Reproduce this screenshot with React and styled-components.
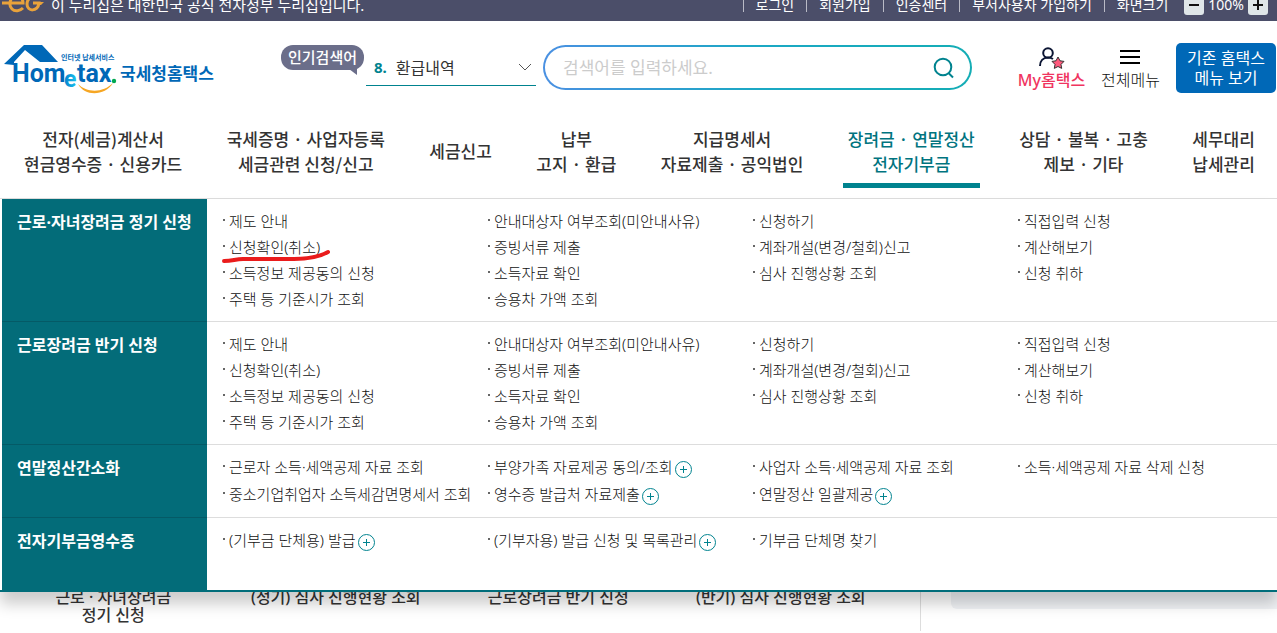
import React from 'react'
import styled, { createGlobalStyle } from 'styled-components'

const NAV = [
    ['전자(세금)계산서', '현금영수증 · 신용카드'],
    ['국세증명 · 사업자등록', '세금관련 신청/신고'],
    ['세금신고'],
    ['납부', '고지 · 환급'],
    ['지급명세서', '자료제출 · 공익법인'],
    ['장려금 · 연말정산', '전자기부금'],
    ['상담 · 불복 · 고충', '제보 · 기타'],
    ['세무대리', '납세관리'],
]
const ACTIVE_NAV = 5

const APPLY_LINKS = [
    [{ text: '제도 안내' }, { text: '안내대상자 여부조회(미안내사유)' }, { text: '신청하기' }, { text: '직접입력 신청' }],
    [{ text: '신청확인(취소)' }, { text: '증빙서류 제출' }, { text: '계좌개설(변경/철회)신고' }, { text: '계산해보기' }],
    [{ text: '소득정보 제공동의 신청' }, { text: '소득자료 확인' }, { text: '심사 진행상황 조회' }, { text: '신청 취하' }],
    [{ text: '주택 등 기준시가 조회' }, { text: '승용차 가액 조회' }],
]

const SECTIONS = [
    {
        title: '근로·자녀장려금 정기 신청',
        rows: APPLY_LINKS.map((row, i) => (i === 1 ? [{ ...row[0], marked: true }, ...row.slice(1)] : row)),
    },
    { title: '근로장려금 반기 신청', rows: APPLY_LINKS },
    {
        title: '연말정산간소화',
        rows: [
            [
                { text: '근로자 소득·세액공제 자료 조회' },
                { text: '부양가족 자료제공 동의/조회', more: true },
                { text: '사업자 소득·세액공제 자료 조회' },
                { text: '소득·세액공제 자료 삭제 신청' },
            ],
            [
                { text: '중소기업취업자 소득세감면명세서 조회' },
                { text: '영수증 발급처 자료제출', more: true },
                { text: '연말정산 일괄제공', more: true },
            ],
        ],
    },
    {
        title: '전자기부금영수증',
        rows: [
            [
                { text: '(기부금 단체용) 발급', more: true },
                { text: '(기부자용) 발급 신청 및 목록관리', more: true },
                { text: '기부금 단체명 찾기' },
            ],
        ],
    },
]

const App = () => {
    return (
        <Page>
            <GlobalStyle />
            <TopBar>
                <Notice>
                    <GovMark />
                    <span>이 누리집은 대한민국 공식 전자정부 누리집입니다.</span>
                </Notice>
                <UserLinks>
                    <a href="#login">로그인</a>
                    <a href="#join">회원가입</a>
                    <a href="#cert">인증센터</a>
                    <a href="#dept">부서사용자 가입하기</a>
                    <span>화면크기</span>
                </UserLinks>
                <Zoom>
                    <ZoomButton type="button" aria-label="축소"><ZoomIcon /></ZoomButton>
                    <span>100%</span>
                    <ZoomButton type="button" aria-label="확대"><ZoomIcon plus /></ZoomButton>
                </Zoom>
            </TopBar>

            <Header>
                <LogoLink href="#home" aria-label="국세청 홈택스"><Logo /></LogoLink>
                <Popular>
                    <Badge>인기검색어</Badge>
                    <Keyword type="button">
                        <b>8.</b>
                        <span>환급내역</span>
                        <svg width="14" height="8" viewBox="0 0 14 8" fill="none" stroke="#555">
                            <path d="M1 1l6 6 6-6" />
                        </svg>
                    </Keyword>
                </Popular>
                <Search>
                    <input type="text" placeholder="검색어를 입력하세요." aria-label="검색어" />
                    <button type="button" aria-label="검색">
                        <svg width="22" height="22" viewBox="0 0 22 22" fill="none" stroke="#00838f" strokeWidth="2">
                            <circle cx="10" cy="10" r="8.3" />
                            <path d="M15.500 16l4.500 4.500" />
                        </svg>
                    </button>
                </Search>
                <Tools>
                    <Tool href="#my" $pink>
                        <UserIcon />
                        My홈택스
                    </Tool>
                    <Tool href="#all">
                        <svg width="28" height="24" viewBox="0 0 28 24" stroke="#000" strokeWidth="2">
                            <path d="M3 6h20M3 12h20M3 18h20" />
                        </svg>
                        전체메뉴
                    </Tool>
                    <OldMenu type="button">기존 홈택스<br />메뉴 보기</OldMenu>
                </Tools>
            </Header>

            <Nav>
                {NAV.map((lines, i) => (
                    <NavItem key={i} href={`#menu${i}`} $active={i === ACTIVE_NAV}>
                        {lines.map((line) => <span key={line}>{line}</span>)}
                    </NavItem>
                ))}
            </Nav>

            <Mega>
                {SECTIONS.map((section) => (
                    <Section key={section.title}>
                        <SectionTitle>{section.title}</SectionTitle>
                        <Links>
                            {section.rows.map((row, i) => (
                                <LinkRow key={i}>
                                    {row.map((item) => (
                                        <LinkItem key={item.text}>
                                            <a href="#link">{item.text}</a>
                                            {item.more && <MoreButton />}
                                            {item.marked && <Underline />}
                                        </LinkItem>
                                    ))}
                                </LinkRow>
                            ))}
                        </Links>
                    </Section>
                ))}
            </Mega>

            <Content>
                <Shortcuts>
                    <a href="#s1">근로 · 자녀장려금<br />정기 신청</a>
                    <a href="#s2">(정기) 심사 진행현황 조회</a>
                    <a href="#s3">근로장려금 반기 신청</a>
                    <a href="#s4">(반기) 심사 진행현황 조회</a>
                </Shortcuts>
                <Side><SideCard /></Side>
            </Content>
        </Page>
    )
}

const GovMark = () => (
    <svg width="44" height="20" viewBox="0 0 44 20" fill="none" stroke="#e9a23b" strokeWidth="3">
        <path d="M2 8h21c0-5-4-8-7-7-6 1-8 9-4 13 3 3 8 2 11-1" />
        <path d="M40 2c-6-3-13 1-13 7 0 8 11 8 12-1h-6" />
        <path d="M38 7h6l-3 3h-4z" fill="#e9a23b" stroke="none" />
    </svg>
)

const ZoomIcon = ({ plus }) => (
    <svg width="12" height="12" viewBox="0 0 12 12" stroke="#111" strokeWidth="2">
        <path d={plus ? 'M1 6h10M6 1v10' : 'M1 6h10'} />
    </svg>
)

const Logo = () => (
    <svg width="212" height="54" viewBox="0 0 212 54" fill="#0068b7" fontWeight="700">
        <defs>
            <linearGradient id="logoE" x1="0" x2="1">
                <stop offset="0" stopColor="#0080cc" />
                <stop offset="1" stopColor="#1cc3ee" />
            </linearGradient>
        </defs>
        <path d="M0 21L20 2h18l16 17H36L21 7 10 19v3z" />
        <text x="57" y="17" fontSize="7">인터넷 납세서비스</text>
        <g fontFamily="Roboto, sans-serif">
            <text x="8" y="39" fontSize="25">Hom</text>
            <text x="60" y="44" fontSize="23" fill="url(#logoE)">e</text>
            <text x="73" y="39" fontSize="25">tax</text>
        </g>
        <circle cx="110" cy="38" r="2.2" fill="#00a84f" />
        <path d="M74 41c9 9 25 9 35-1-8 13-28 14-35 1z" fill="#f6a623" />
        <text x="116" y="37" fontSize="17">국세청홈택스</text>
    </svg>
)

const UserIcon = () => (
    <svg width="28" height="24" viewBox="0 0 28 24" fill="none" stroke="#0b1533" strokeWidth="2">
        <circle cx="11" cy="8" r="4.800" />
        <path d="M3 21c0-5 3-8.500 8-8.500 2 0 3.500.5 5 1.500" />
        <path d="M21 12l2 3.800 4 .6-3 3 .7 4-3.700-1.900-3.700 1.900.7-4-3-3 4-.6z" fill="#ff5a7d" stroke="#333" strokeWidth="1" />
    </svg>
)

const MoreButton = () => (
    <More type="button" aria-label="더보기">
        <svg width="17" height="17" viewBox="0 0 17 17" fill="none" stroke="#00838f">
            <circle cx="8.5" cy="8.5" r="8" />
            <path d="M5 8.500h7M8.500 5v7" />
        </svg>
    </More>
)

const Underline = () => (
    <Mark width="110" height="16" viewBox="0 0 110 16" fill="none" stroke="#ea1c1c" strokeWidth="4" strokeLinecap="round">
        <path d="M3 13c9 0 11-2 19-2h51c15 0 25-2 34-7" />
    </Mark>
)

const GlobalStyle = createGlobalStyle`
    * {
        box-sizing: border-box;
    }
    body {
        margin: 0;
        background: #fff;
        color: #333;
        font-family: 'Noto Sans', 'Noto Sans CJK KR', sans-serif;
        font-size: 15px;
    }
    a {
        color: inherit;
        text-decoration: none;
    }
    button, input {
        font-family: inherit;
        border: 0;
        padding: 0;
        background: none;
    }
    svg {
        display: block;
        flex: none;
    }
`;

const Page = styled.div`
    overflow: hidden;
    min-height: 100vh;
`;

// Top bar
const TopBar = styled.div`
    display: flex;
    align-items: center;
    height: 32px;
    margin-top: -11px;
    padding-right: 9px;
    background: #4b4e69;
    color: #fff;
    line-height: 20px;
    white-space: nowrap;
`;
const Notice = styled.div`
    display: flex;
    align-items: center;
    gap: 7px;
    flex: 1;
`;
const UserLinks = styled.div`
    display: flex;
    align-items: center;
    font-size: 14px;

    > * {
        line-height: 14px;
        padding: 0 12px;
        border-left: 1px solid #b9bac6;
    }
`;
const Zoom = styled.div`
    display: flex;
    align-items: center;
    gap: 4px;
    font-size: 14px;
    margin-left: 4px;
`;
const ZoomButton = styled.button`
    display: flex;
    align-items: center;
    justify-content: center;
    width: 20px;
    height: 20px;
    border-radius: 3px;
    background: #dfe6e8;
`;

// Header
const Header = styled.header`
    display: flex;
    align-items: flex-start;
    height: 99px;
    padding: 22px 1px 0 4px;
`;
const LogoLink = styled.a`
    margin-right: 65px;
`;
const Popular = styled.div`
    display: flex;
    padding-top: 2px;
`;
const Badge = styled.span`
    position: relative;
    height: 25px;
    margin-right: 2px;
    padding: 0 7px;
    border-radius: 12px;
    background: #6b6e8a;
    color: #fff;
    font-weight: 500;
    line-height: 24px;

    &::after {
        content: '';
        position: absolute;
        right: 7px;
        bottom: -5px;
        border-top: 6px solid #6b6e8a;
        border-left: 8px solid transparent;
    }
`;
const Keyword = styled.button`
    display: flex;
    align-items: center;
    width: 170px;
    height: 41px;
    padding: 3px 4px 0 8px;
    border-bottom: 1px solid #00838f;
    color: #333;
    font-size: 16px;

    b {
        margin-right: 9px;
        color: #00838f;
        font-size: 15px;
    }
    svg {
        margin-left: auto;
    }
`;
const Search = styled.div`
    display: flex;
    align-items: center;
    flex: 1;
    height: 45px;
    margin: 2px 46px 0 7px;
    padding: 0 15px 0 18px;
    border: 2px solid transparent;
    border-radius: 23px;
    background: linear-gradient(#fff, #fff) padding-box, linear-gradient(90deg, #4a90e2, #1ba8c4 50%, #14adb5) border-box;

    input {
        flex: 1;
        min-width: 0;
        outline: 0;
        font-size: 17px;
    }
    input::placeholder {
        color: #ccc;
    }
`;
const Tools = styled.div`
    display: flex;
    gap: 16px;
`;
const Tool = styled.a`
    display: flex;
    flex-direction: column;
    align-items: center;
    padding-top: 2px;
    color: ${(p) => (p.$pink ? '#f0355f' : '#111')};
    font-size: 16px;
    font-weight: ${(p) => (p.$pink ? 500 : 300)};
    line-height: 22px;
`;
const OldMenu = styled.button`
    width: 100px;
    height: 50px;
    border-radius: 5px;
    background: #0068b7;
    color: #fff;
    font-size: 16px;
    line-height: 20px;
`;

// Navigation
const Nav = styled.nav`
    display: flex;
    justify-content: space-between;
    height: 79px;
    padding: 0 17px 10px 19px;
    border-bottom: 1px solid #ddd;
`;
const NavItem = styled.a`
    display: flex;
    flex-direction: column;
    justify-content: center;
    padding: 0 5px 2px;
    border-bottom: 5px solid ${(p) => (p.$active ? '#00838f' : 'transparent')};
    color: ${(p) => (p.$active ? '#00747f' : '#333')};
    font-family: 'Noto Sans CJK KR', sans-serif;
    font-size: 17px;
    font-weight: 500;
    line-height: 25px;
    text-align: center;
    white-space: nowrap;
`;

// Mega menu
const Mega = styled.div`
    position: relative;
    padding-left: 2px;
    border-bottom: 2px solid #006d7a;
    background: #fff;
    box-shadow: 0 12px 14px rgba(0, 0, 0, 0.2);
`;
const Section = styled.section`
    display: flex;
    min-height: 73px;

    & + & > * {
        border-top: 1px solid #ddd;
    }
    & + & > h2 {
        border-color: #045a66;
    }
`;
const SectionTitle = styled.h2`
    width: 205px;
    margin: 0;
    padding: 11px 15px;
    background: #036c79;
    color: #fff;
    font-size: 16px;
    line-height: 24px;
    white-space: nowrap;
`;
const Links = styled.div`
    flex: 1;
    padding: 9px 0 9px 10px;
    color: #111;
    font-weight: 300;
`;
const LinkRow = styled.ul`
    display: grid;
    grid-template-columns: repeat(4, 1fr);
    margin: 0;
    padding: 0;
    list-style: none;
`;
const LinkItem = styled.li`
    position: relative;
    display: flex;
    align-items: flex-start;
    min-height: 26px;
    padding-left: 6px;
    line-height: 26px;
    white-space: nowrap;

    &::before {
        content: '';
        width: 2px;
        height: 2px;
        margin: 11px 4px 0 0;
        background: #666;
    }
`;
const More = styled.button`
    margin: 7px 0 3px 2px;
`;
const Mark = styled.svg`
    position: absolute;
    left: 4px;
    top: 14px;
`;

// Content below the menu
const Content = styled.main`
    display: flex;
    height: 43px;
    margin-top: -4px;
`;
const Shortcuts = styled.div`
    display: flex;
    flex: 1;
    padding: 0 28px 0 2px;
    border-right: 1px solid #ddd;
    font-size: 16px;
    font-weight: 500;
    line-height: 18px;
    text-align: center;

    a {
        flex: 1;
    }
`;
const Side = styled.div`
    width: 356px;
    padding-left: 30px;
`;
const SideCard = styled.div`
    height: 21px;
    border-radius: 0 0 0 6px;
    background: #f1f3f6;
`;

export default App
